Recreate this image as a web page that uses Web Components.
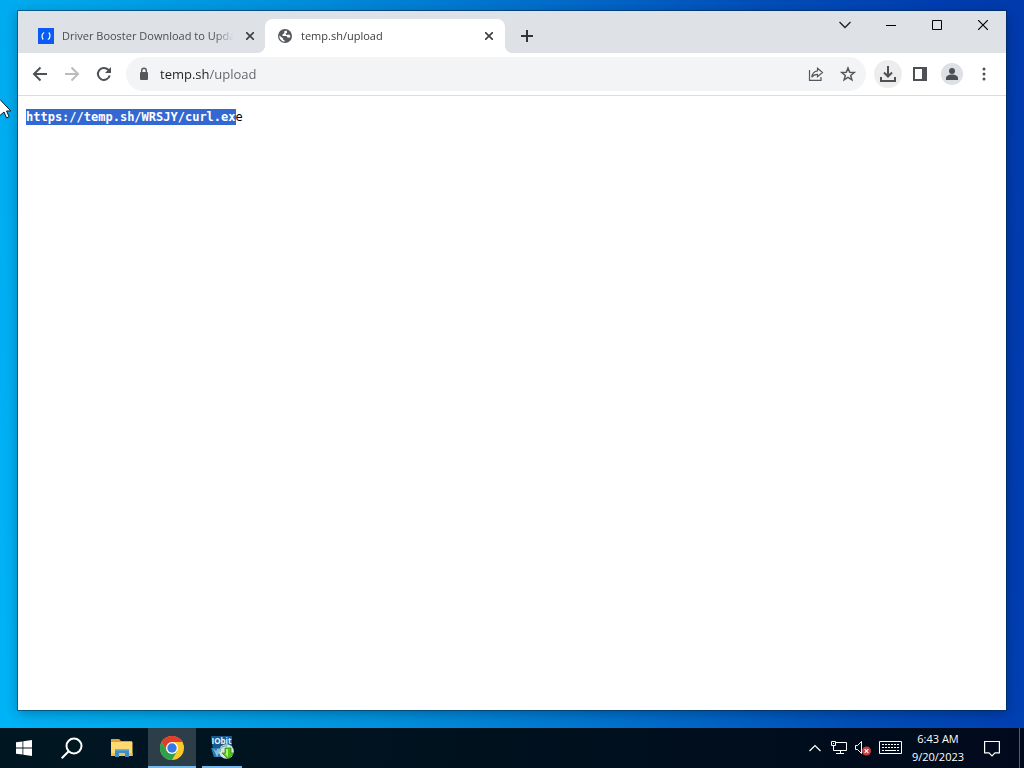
<!DOCTYPE html>
<html lang="en">
<head>
<meta charset="utf-8">
<title>temp.sh/upload</title>
<style>
    html, body {
        margin: 0;
        height: 100%;
    }
    body {
        font-family: "Open Sans", "Noto Sans", sans-serif;
        font-size: 11px;
        overflow: hidden;
    }
</style>
</head>
<body>
<desktop-screen>
    <browser-window>
        <browser-tab slot="tabs">
            <svg slot="icon" width="16" height="16" viewBox="0 0 16 16"><path fill="#0b5cf5" d="M0 0h16v16H0z"/><path fill="none" stroke="#fff" stroke-width="1.2" d="M6.200 4.500C3.600 5.600 3.400 9.500 5.200 11.500M9.800 11.500c2.600-1.100 2.800-5 1-7"/></svg>
            Driver Booster Download to Update Drivers
        </browser-tab>
        <browser-tab slot="tabs" active>
            <svg slot="icon" width="16" height="16" viewBox="0 0 16 16"><circle cx="8" cy="8" r="7" fill="#55585c"/><path fill="#fff" d="M9.500 2.500 7 3.600 7.500 5 5.500 6.500v1.500h4l1 1.500 2 .2 1-1.700L12 6.500 9.500 7 8.600 5.800l1.600-1.400zM2.300 7.500 6.200 10.500v1.200l1.500.8v1.200C4.500 13.600 2.200 11 2.300 7.500z"/></svg>
            temp.sh/upload
        </browser-tab>
        <address-bar slot="toolbar"></address-bar>
        <text-page><mark>https://temp.sh/WRSJY/curl.ex</mark>e</text-page>
    </browser-window>
    <task-bar slot="taskbar"></task-bar>
    <mouse-pointer slot="pointer"></mouse-pointer>
</desktop-screen>

<script>
const buttonStyles = `
    button {
        display: flex;
        align-items: center;
        justify-content: center;
        flex: none;
        margin: 0;
        padding: 0;
        border: 0;
        background: none;
        color: inherit;
        font: inherit;
    }
    svg {
        display: block;
        flex: none;
    }
`;

function makeTemplate(html) {
    const template = document.createElement('template');
    template.innerHTML = html;
    return template;
}

const desktopTemplate = makeTemplate(`
    <style>
        :host {
            display: flex;
            flex-direction: column;
            height: 100vh;
            background:
                linear-gradient(82deg, #00b4f8 0%, #00a8ec 14%, #0092de 34%, #0070cd 56%, #004fb9 76%, #003eb2 92%, #003aac 100%);
        }
        main {
            display: flex;
            flex: 1;
            min-height: 0;
            padding: 11px 18px 18px;
        }
    </style>
    <main><slot></slot></main>
    <slot name="taskbar"></slot>
    <slot name="pointer"></slot>
`);

class DesktopScreen extends HTMLElement {
    constructor() {
        super();
        this.attachShadow({mode: 'open'}).appendChild(desktopTemplate.content.cloneNode(true));
    }
}

const windowTemplate = makeTemplate(`
    <style>
        ${buttonStyles}
        :host {
            display: flex;
            flex-direction: column;
            flex: 1;
            min-width: 0;
            background: #ffffff;
            box-shadow: 0 0 0 1px rgba(0, 40, 80, 0.55), 0 3px 12px rgba(0, 0, 0, 0.3);
        }
        header {
            display: flex;
            height: 42px;
            flex: none;
            background: #dee1e6;
        }
        .tabs {
            display: flex;
            flex: 1;
            min-width: 0;
            align-items: flex-end;
            padding-left: 8px;
        }
        .new-tab {
            width: 28px;
            height: 34px;
            margin-left: 8px;
        }
        .controls {
            display: flex;
        }
        .controls button {
            width: 46px;
            height: 28px;
        }
        .page {
            flex: 1;
            min-height: 0;
            overflow: auto;
        }
    </style>
    <header>
        <div class="tabs" role="tablist">
            <slot name="tabs"></slot>
            <button class="new-tab" aria-label="New tab"><svg width="12" height="12" viewBox="0 0 12 12"><path stroke="#303338" stroke-width="2" d="M6 0v12M0 6h12"/></svg></button>
        </div>
        <div class="controls">
            <button aria-label="Search tabs"><svg width="12" height="8" viewBox="0 0 12 8"><path fill="none" stroke="#202124" stroke-width="1.300" d="m.5 1 5.500 5.500L11.500 1"/></svg></button>
            <button aria-label="Minimize"><svg width="10" height="10" viewBox="0 0 10 10"><path stroke="#000" d="M0 5.500h10"/></svg></button>
            <button aria-label="Maximize"><svg width="10" height="10" viewBox="0 0 10 10"><path fill="none" stroke="#000" d="M.5.5h9v9h-9z"/></svg></button>
            <button aria-label="Close"><svg width="10" height="10" viewBox="0 0 10 10"><path stroke="#000" stroke-width="1.200" d="m0 0 10 10M10 0 0 10"/></svg></button>
        </div>
    </header>
    <slot name="toolbar"></slot>
    <div class="page"><slot></slot></div>
`);

class BrowserWindow extends HTMLElement {
    constructor() {
        super();
        this.attachShadow({mode: 'open'}).appendChild(windowTemplate.content.cloneNode(true));
    }
}

const tabTemplate = makeTemplate(`
    <style>
        ${buttonStyles}
        :host {
            display: flex;
            align-items: center;
            position: relative;
            flex: 0 1 240px;
            min-width: 0;
            height: 34px;
            box-sizing: border-box;
            padding: 0 8px 0 12px;
            gap: 8px;
            border-radius: 8px 8px 0 0;
            color: #4a4d51;
        }
        :host([active]) {
            margin-left: -1px;
            background: #ffffff;
            color: #3c4043;
        }
        /* curved feet where the active tab meets the toolbar */
        :host([active])::before,
        :host([active])::after {
            content: '';
            position: absolute;
            bottom: 0;
            width: 8px;
            height: 8px;
        }
        :host([active])::before {
            right: 100%;
            background: radial-gradient(circle at 0 0, transparent 8px, #ffffff 8px);
        }
        :host([active])::after {
            left: 100%;
            background: radial-gradient(circle at 100% 0, transparent 8px, #ffffff 8px);
        }
        button.title {
            justify-content: flex-start;
            flex: 1;
            min-width: 0;
            gap: 8px;
        }
        .text {
            flex: 1;
            min-width: 0;
            overflow: hidden;
            white-space: nowrap;
            text-align: left;
            line-height: 20px;
            -webkit-mask-image: linear-gradient(to left, transparent, #000 20px);
            mask-image: linear-gradient(to left, transparent, #000 20px);
        }
        .close {
            width: 16px;
            height: 16px;
        }
    </style>
    <button class="title" role="tab"><slot name="icon"></slot><span class="text"><slot></slot></span></button>
    <button class="close" aria-label="Close tab"><svg width="8" height="8" viewBox="0 0 8 8"><path stroke="#3c4043" stroke-width="1.600" d="m0 0 8 8M8 0 0 8"/></svg></button>
`);

class BrowserTab extends HTMLElement {
    constructor() {
        super();
        this.attachShadow({mode: 'open'}).appendChild(tabTemplate.content.cloneNode(true));
    }
    connectedCallback() {
        this.shadowRoot.querySelector('.title').setAttribute('aria-selected', this.hasAttribute('active'));
    }
}

const addressTemplate = makeTemplate(`
    <style>
        ${buttonStyles}
        :host {
            display: flex;
            align-items: center;
            flex: none;
            height: 42px;
            padding: 0 8px;
            gap: 4px;
            border-bottom: 1px solid #dadce0;
            background: #ffffff;
            color: #55585c;
        }
        button {
            width: 28px;
            height: 28px;
            border-radius: 50%;
        }
        .omnibox {
            display: flex;
            align-items: center;
            flex: 1;
            min-width: 0;
            height: 34px;
            margin: 0 4px;
            padding: 0 4px 0 10px;
            gap: 4px;
            border-radius: 17px;
            background: #f3f4f6;
        }
        /* host part is dark, the path is grey */
        input {
            flex: 1;
            min-width: 0;
            margin: 0;
            padding: 0 0 0 4px;
            border: 0;
            outline: 0;
            font: inherit;
            font-size: 13px;
            line-height: 20px;
            color: transparent;
            background: linear-gradient(90deg, #202124 53px, #5f6368 53px);
            -webkit-background-clip: text;
            background-clip: text;
        }
        .downloads {
            background: #ededee;
        }
    </style>
    <button aria-label="Back"><svg width="16" height="16" viewBox="0 0 16 16"><path fill="none" stroke="#4d5156" stroke-width="2" d="M15 8H2.500M8.500 1.500 2 8l6.500 6.500"/></svg></button>
    <button aria-label="Forward"><svg width="16" height="16" viewBox="0 0 16 16"><path fill="none" stroke="#b9bbbe" stroke-width="2" d="M1 8h12.500M7.500 1.500 14 8l-6.500 6.500"/></svg></button>
    <button aria-label="Reload"><svg width="16" height="16" viewBox="0 0 16 16"><path fill="none" stroke="#4d5156" stroke-width="2" d="M13.700 9.500A6 6 0 1 1 12.300 3.800L13.800 5.400"/><path fill="#4d5156" d="M15 1v6H9z"/></svg></button>
    <div class="omnibox">
        <svg width="16" height="16" viewBox="0 0 16 16"><rect x="4" y="6" width="8" height="8" rx="1" fill="#55585c"/><path fill="none" stroke="#55585c" stroke-width="1.400" d="M5.700 6.500V4.600a2.300 2.300 0 0 1 4.600 0v1.900"/></svg>
        <input type="text" aria-label="Address and search bar" value="temp.sh/upload" spellcheck="false">
        <button aria-label="Share"><svg width="16" height="16" viewBox="0 0 16 16"><path fill="none" stroke="#55585c" stroke-width="1.200" d="M1.500 4v10.400h11.500V11M9.500 2.200l5 4.300-5 4.200V8.300C6.500 8.300 5 9.300 3.800 11.300 4.200 7.500 6 5.300 9.500 4.800z"/></svg></button>
        <button aria-label="Bookmark this tab"><svg width="16" height="16" viewBox="0 0 16 16"><path fill="none" stroke="#55585c" stroke-width="1.500" d="m8 2 1.700 4.200 4.500.3-3.500 2.900 1.200 4.400L8 11.400l-3.900 2.400 1.200-4.400-3.500-2.900 4.500-.3z"/></svg></button>
    </div>
    <button class="downloads" aria-label="Downloads"><svg width="16" height="16" viewBox="0 0 16 16"><path fill="none" stroke="#4d5156" stroke-width="2" d="M8 0v10M4 6.500l4 4 4-4M1 11v4h14v-4"/></svg></button>
    <button aria-label="Side panel"><svg width="14" height="14" viewBox="0 0 14 14"><path fill="none" stroke="#4d5156" stroke-width="2" d="M1 1h12v12H1z"/><path fill="#4d5156" d="M9 1h4v12H9z"/></svg></button>
    <button aria-label="Profile"><svg width="22" height="22" viewBox="0 0 22 22"><circle cx="11" cy="11" r="11" fill="#dde0e5"/><circle cx="11" cy="8" r="3" fill="#4d5156"/><path fill="#4d5156" d="M5 17v-2c0-2 3-3.500 6-3.500s6 1.500 6 3.500v2z"/></svg></button>
    <button aria-label="Menu"><svg width="4" height="14" viewBox="0 0 4 14"><g fill="#4d5156"><circle cx="2" cy="2" r="1.500"/><circle cx="2" cy="7" r="1.500"/><circle cx="2" cy="12" r="1.500"/></g></svg></button>
`);

class AddressBar extends HTMLElement {
    constructor() {
        super();
        this.attachShadow({mode: 'open'}).appendChild(addressTemplate.content.cloneNode(true));
    }
}

const pageTemplate = makeTemplate(`
    <style>
        :host {
            display: block;
            padding: 13px 8px;
            color: #000000;
        }
        pre {
            margin: 0;
            font: 12px/16px "DejaVu Sans Mono", monospace;
            white-space: pre-wrap;
        }
        ::slotted(mark) {
            display: inline-block;
            background: #3367d1;
            color: #ffffff;
            font-weight: bold;
        }
    </style>
    <pre><slot></slot></pre>
`);

class TextPage extends HTMLElement {
    constructor() {
        super();
        this.attachShadow({mode: 'open'}).appendChild(pageTemplate.content.cloneNode(true));
    }
}

const taskbarTemplate = makeTemplate(`
    <style>
        ${buttonStyles}
        :host {
            display: flex;
            flex: none;
            justify-content: space-between;
            height: 40px;
            background: linear-gradient(90deg, #001722, #00111e 50%, #000a1c);
            color: #ffffff;
        }
        nav, .tray {
            display: flex;
        }
        nav button {
            width: 48px;
        }
        .apps {
            display: flex;
            gap: 2px;
            margin-left: 2px;
        }
        .running {
            background: linear-gradient(#76b9ed, #76b9ed) center bottom / 40px 2px no-repeat;
        }
        .current {
            background: linear-gradient(#76b9ed, #76b9ed) center bottom / 48px 2px no-repeat, #2e3e49;
        }
        .tray button {
            width: 24px;
        }
        .tray .keyboard {
            width: 30px;
        }
        .tray .clock {
            flex-direction: column;
            width: 66px;
            line-height: 18px;
        }
        .tray .notifications {
            width: 42px;
        }
        .tray .show-desktop {
            width: 5px;
            margin-left: 6px;
            border-left: 1px solid #50606e;
        }
    </style>
    <nav aria-label="Taskbar">
        <button aria-label="Start"><svg width="16" height="16" viewBox="0 0 16 16"><path fill="#fff" d="M0 2.300 6.500 1.400v6.200H0zM7.300 1.300 16 0v7.600H7.300zM0 8.400h6.500v6.200L0 13.700zM7.300 8.400H16V16l-8.700-1.300z"/></svg></button>
        <button aria-label="Search"><svg width="24" height="24" viewBox="0 0 24 24"><circle cx="14" cy="10" r="7.500" fill="none" stroke="#fff" stroke-width="2"/><path stroke="#fff" stroke-width="2" d="m8.700 15.300-7 7"/></svg></button>
        <div class="apps">
            <button aria-label="File Explorer"><svg width="22" height="20" viewBox="0 0 22 20"><path fill="#dba535" d="M0 1h8l2 2h11v5H0z"/><path fill="#ffd970" d="M0 4h21.500v14H0z"/><path fill="#f5c04c" d="M0 15h21.500v3H0z"/><path fill="#3d8fcb" d="M4 11h14v8h-4v-4H8v4H4z"/><path fill="#69b3df" d="M4 11h14v1.500H4z"/></svg></button>
            <button class="current" aria-label="Google Chrome"><svg width="24" height="24" viewBox="0 0 24 24"><circle cx="12" cy="12" r="12" fill="#fbc926"/><path fill="#e33b2e" d="M1.600 6A12 12 0 0 1 22.400 6H12L6.800 15z"/><path fill="#2da14d" d="M1.600 6A12 12 0 0 0 12 24l5.200-9L12 12l-5.200 3z"/><circle cx="12" cy="12" r="6" fill="#fff"/><circle cx="12" cy="12" r="4.700" fill="#3478e6"/></svg></button>
            <button class="running" aria-label="IObit Driver Booster"><svg width="24" height="24" viewBox="0 0 24 24"><path fill="#165a91" d="M1 0h21v11l-4 10H4z"/><path fill="#247db3" d="M1 12h16l-4 9H4z"/><path fill="#d0e9f5" d="m3 12 4 9 2-4 3 4v-9l-2 3-2-3-2 3z" opacity=".6"/><text x="11.500" y="8" text-anchor="middle" font-family="Open Sans" font-size="8" font-weight="bold" fill="#e7f4fb">IObit</text><circle cx="16.500" cy="15.500" r="7.300" fill="#d4e6dc"/><path fill="none" stroke="#5b9ca3" d="M10 16c0-4 3-6.500 7-6"/><path fill="#55c51e" stroke="#24840c" stroke-width=".7" d="M15 12h6v5h3l-6 6-6-6h3z"/><path fill="#b7f266" d="M16 13h2v8l-3-3h1z"/></svg></button>
        </div>
    </nav>
    <div class="tray">
        <button aria-label="Show hidden icons"><svg width="12" height="8" viewBox="0 0 12 8"><path fill="none" stroke="#fff" stroke-width="1.200" d="m.5 7 5.500-5.500L11.500 7"/></svg></button>
        <button aria-label="Network"><svg width="16" height="14" viewBox="0 0 16 14"><path fill="none" stroke="#fff" d="M5 1.500h10.500v8H2.500V4.500M9.500 9.500v3M5 12.500h8M.5.5h4v4h-4z"/><path fill="#fff" d="M2 2h1v1H2z"/></svg></button>
        <button aria-label="Volume"><svg width="16" height="16" viewBox="0 0 16 16"><path fill="none" stroke="#fff" d="M.5 5.500h2l4-4v12l-4-4h-2z"/><circle cx="11.500" cy="11" r="4.500" fill="#c93f3f"/><path stroke="#fff" stroke-width="1.200" d="m9.700 9.200 3.600 3.600M13.300 9.200l-3.600 3.600"/></svg></button>
        <button class="keyboard" aria-label="Touch keyboard"><svg width="23" height="14" viewBox="0 0 23 14"><path fill="none" stroke="#fff" d="M.5.5h22v12H.5z"/><path stroke="#fff" stroke-dasharray="2 1" d="M3 3.500h17M3 6.500h17"/><path stroke="#fff" d="M3 9.500h2M6 9.500h11M18 9.500h2"/></svg></button>
        <button class="clock"><span>6:43 AM</span><span>9/20/2023</span></button>
        <button class="notifications" aria-label="Notifications"><svg width="16" height="17" viewBox="0 0 16 17"><path fill="none" stroke="#fff" stroke-width="1.200" d="M.6 1.500h14.800v11.300H11L8 15.800l-3-3H.6z"/></svg></button>
        <button class="show-desktop" aria-label="Show desktop"></button>
    </div>
`);

class TaskBar extends HTMLElement {
    constructor() {
        super();
        this.attachShadow({mode: 'open'}).appendChild(taskbarTemplate.content.cloneNode(true));
    }
}

const pointerTemplate = makeTemplate(`
    <style>
        :host {
            display: block;
            position: absolute;
            left: 0;
            top: 99px;
            pointer-events: none;
        }
        svg {
            display: block;
        }
    </style>
    <svg width="12" height="20" viewBox="0 0 12 20"><path fill="#fff" stroke="#0b1a2a" d="M0 .5 10.800 12H6.500l2.700 5.800-2.700 1.100L4 13l-4 3.500"/></svg>
`);

class MousePointer extends HTMLElement {
    constructor() {
        super();
        this.attachShadow({mode: 'open'}).appendChild(pointerTemplate.content.cloneNode(true));
    }
}

customElements.define('desktop-screen', DesktopScreen);
customElements.define('browser-window', BrowserWindow);
customElements.define('browser-tab', BrowserTab);
customElements.define('address-bar', AddressBar);
customElements.define('text-page', TextPage);
customElements.define('task-bar', TaskBar);
customElements.define('mouse-pointer', MousePointer);
</script>
</body>
</html>
